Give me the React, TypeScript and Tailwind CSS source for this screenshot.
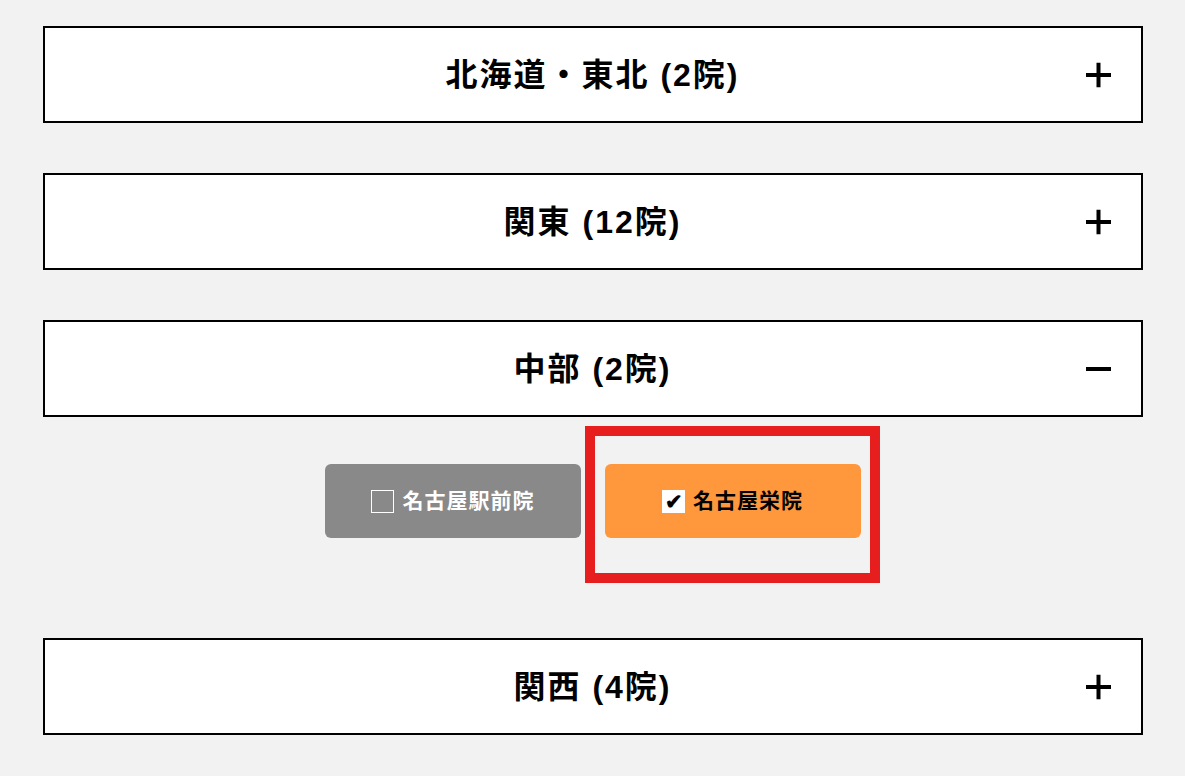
import React, { useState } from "react"

type Clinic = { name: string; checked: boolean }
type Region = { id: string; title: string; clinics: Clinic[] }

const regions: Region[] = [
  { id: "hokkaido", title: "北海道・東北 (2院)", clinics: [] },
  { id: "kanto", title: "関東 (12院)", clinics: [] },
  {
    id: "chubu",
    title: "中部 (2院)",
    clinics: [
      { name: "名古屋駅前院", checked: false },
      { name: "名古屋栄院", checked: true },
    ],
  },
  { id: "kansai", title: "関西 (4院)", clinics: [] },
]

function PlusMinus({ open }: { open: boolean }) {
  return (
    <svg width="25" height="25" viewBox="0 0 25 25" aria-hidden="true">
      <rect x="0" y="10.5" width="25" height="4" fill="#000" />
      {!open && <rect x="10.5" y="0" width="4" height="25" fill="#000" />}
    </svg>
  )
}

function ClinicButton({ clinic, highlight }: { clinic: Clinic; highlight?: boolean }) {
  return (
    <div className="relative">
      {highlight && (
        <div className="pointer-events-none absolute -left-[20px] -top-[38px] h-[157px] w-[295px] border-[10px] border-[#e61e1e]" />
      )}
      <button
        className={
          clinic.checked
            ? "flex h-[74px] w-[256px] items-center justify-center gap-[8px] rounded-[6px] bg-[#ff973d] text-black"
            : "flex h-[74px] w-[256px] items-center justify-center gap-[9px] rounded-[6px] bg-[#898989] text-white"
        }
      >
        {clinic.checked ? (
          <span className="flex h-[23px] w-[23px] items-center justify-center bg-white text-[21px] font-bold leading-none text-black">
            ✔
          </span>
        ) : (
          <span className="h-[23px] w-[23px] border-[1.5px] border-white" />
        )}
        <span className="text-[21px] font-bold tracking-[1px]">{clinic.name}</span>
      </button>
    </div>
  )
}

export default function App() {
  const [openId, setOpenId] = useState("chubu")

  return (
    <div
      className="min-h-[776px] bg-[#f2f2f2] pt-[26px]"
      style={{ fontFamily: '"Liberation Sans", "Noto Sans CJK JP", sans-serif' }}
    >
      <div className="mx-auto flex w-[1100px] flex-col gap-[50px]">
        {regions.map((region) => {
          const open = openId === region.id
          return (
            <div key={region.id}>
              <button
                onClick={() => setOpenId(open ? "" : region.id)}
                className="relative flex h-[97px] w-full items-center justify-center border-2 border-black bg-white"
              >
                <span className="text-[32px] font-bold tracking-[2px] text-black">{region.title}</span>
                <span className="absolute right-[30px] top-1/2 flex -translate-y-1/2">
                  <PlusMinus open={open} />
                </span>
              </button>
              {open && region.clinics.length > 0 && (
                <div className="flex justify-center gap-[24px] pt-[47px] pb-[50px]">
                  {region.clinics.map((c) => (
                    <ClinicButton key={c.name} clinic={c} highlight={c.checked} />
                  ))}
                </div>
              )}
            </div>
          )
        })}
      </div>
    </div>
  )
}
